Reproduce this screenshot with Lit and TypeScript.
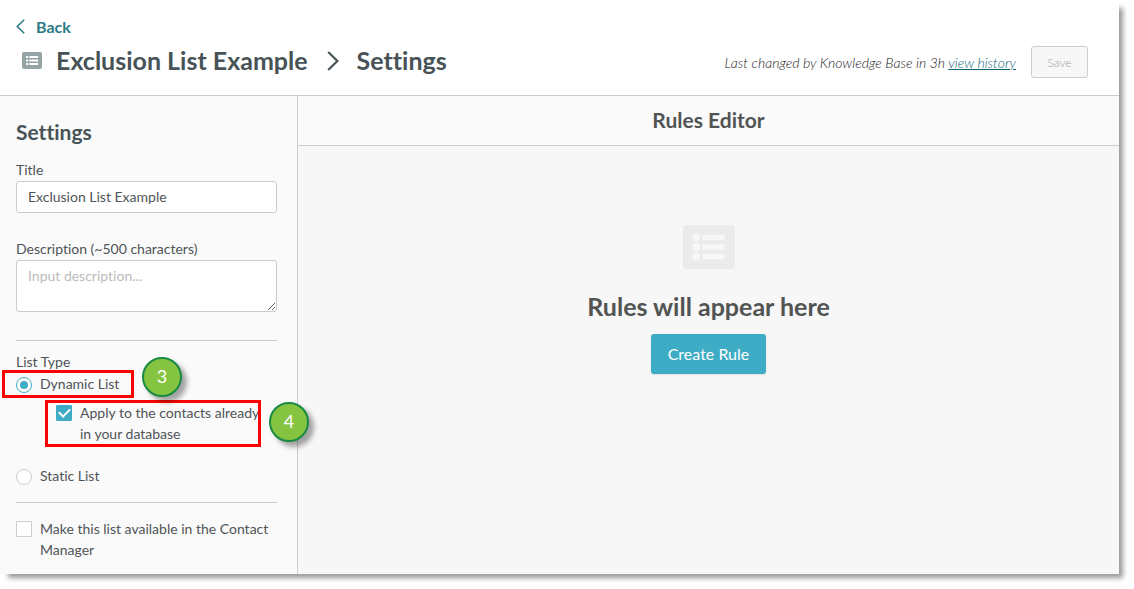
import { LitElement, html, css, svg } from "lit";
import { customElement, property, state } from "lit/decorators.js";

@customElement("list-icon")
class ListIcon extends LitElement {
  @property({ type: Boolean }) small = false;
  static styles = css`
    :host { display: block; }
    svg { display: block; width: 100%; height: auto; }
    .plate { fill: var(--icon-plate, #95a5a6); }
    .mark { fill: var(--icon-mark, #fff); }
  `;
  render() {
    if (this.small) {
      return html`<svg viewBox="0 0 20 17" aria-hidden="true">
        <rect class="plate" width="20" height="17" rx="2"></rect>
        ${[4, 7.5, 11].map(
          (y) => svg`
            <rect class="mark" x="4" y=${y} width="2.2" height="2" rx="0.6"></rect>
            <rect class="mark" x="7.2" y=${y} width="9" height="2" rx="0.4"></rect>`
        )}
      </svg>`;
    }
    return html`<svg viewBox="0 0 52 44" aria-hidden="true">
      <rect class="plate" width="52" height="44" rx="4"></rect>
      ${[12.5, 22, 31.5].map(
        (y) => svg`
          <circle class="mark" cx="13" cy=${y} r="3.9"></circle>
          <rect class="mark" x="19.5" y=${y - 2.7} width="22" height="5.4" rx="1"></rect>`
      )}
    </svg>`;
  }
}

@customElement("step-badge")
class StepBadge extends LitElement {
  @property() label = "";
  static styles = css`
    :host {
      display: flex;
      align-items: center;
      justify-content: center;
      box-sizing: border-box;
      width: 40px;
      height: 40px;
      padding-bottom: 2px;
      border: 2px solid #1a8a43;
      border-radius: 50%;
      background: #85c441;
      box-shadow: 5px 5px 5px rgba(0, 0, 0, 0.35);
      color: #fff;
      font-size: 18px;
      line-height: 24px;
    }
  `;
  render() {
    return html`${this.label}`;
  }
}

@customElement("app-root")
class AppRoot extends LitElement {
  @state() private listType = "dynamic";

  static styles = css`
    :host {
      display: block;
      box-sizing: border-box;
      min-height: 100vh;
      padding: 0 15px 15px 0;
      background: #fff;
      font-family: Lato, "Liberation Sans", sans-serif;
      font-size: 14px;
      font-variant-ligatures: none;
      line-height: 21px;
      color: #4f5457;
    }
    * { box-sizing: border-box; }
    h1, h2, h3, p { margin: 0; }
    a { color: #2c7a86; }
    input, textarea, button { font: inherit; color: inherit; margin: 0; }

    .window {
      display: flex;
      flex-direction: column;
      min-height: calc(100vh - 15px);
      background: #fff;
      box-shadow: 6px 6px 5px -2px rgba(0, 0, 0, 0.4);
    }
    .header {
      padding: 16px 31px 17px 16px;
      border-bottom: 1px solid #ccc;
    }
    .back {
      display: flex;
      align-items: center;
      gap: 11px;
      width: fit-content;
      font-size: 16px;
      font-weight: 700;
      text-decoration: none;
    }
    .back svg { width: 9px; height: 15px; }
    .title-row {
      display: flex;
      align-items: flex-start;
      justify-content: space-between;
      margin-top: 9px;
    }
    .crumbs { display: flex; align-items: center; height: 29px; color: #475356; }
    .crumbs h1 { font-size: 25px; line-height: 28px; font-weight: 700; padding-bottom: 1px; }
    .crumbs list-icon { width: 20px; margin: 0 14px 0 6px; }
    .crumbs svg { width: 12px; height: 20px; margin: 0 18px 0 19px; }
    .actions { display: flex; align-items: center; gap: 15px; }
    .changed { font-style: italic; font-weight: 300; color: #222; }
    .changed a { color: #0f6470; }
    .save {
      width: 57px;
      height: 32px;
      padding: 0;
      border: 1px solid #ccc;
      border-radius: 3px;
      background: #f7f7f7;
      color: #a0a0a0;
      font-size: 12px;
      font-weight: 300;
    }

    .body { display: flex; flex: 1; }
    .sidebar {
      width: 298px;
      flex: none;
      padding: 24px 20px 12px 16px;
      border-right: 1px solid #ccc;
      background: #fafafa;
    }
    .sidebar h2 {
      margin-bottom: 15px;
      font-size: 21px;
      line-height: 24px;
      font-weight: 700;
      color: #475356;
    }
    .label { display: block; padding-bottom: 1px; }
    .text {
      display: block;
      width: 100%;
      height: 32px;
      padding: 0 11px 2px;
      border: 1px solid #ccc;
      border-radius: 3px;
      background: #fff;
    }
    .area { height: 52px; padding: 4px 11px; resize: vertical; }
    .area::placeholder { color: #bbb; opacity: 1; }
    .field + .field { margin-top: 25px; }
    .rule { height: 1px; margin: 0; border: 0; background: #ccc; }
    .rule.first { margin: 28px 0 10px; }
    .rule.second { margin: 16px 0 15px; }

    .choice { display: flex; align-items: flex-start; gap: 8px; }
    fieldset { min-width: 0; margin: 0; padding: 0; border: 0; }
    legend { padding: 0 0 1px; }
    .tick, .radio {
      appearance: none;
      display: grid;
      place-items: center;
      flex: none;
      width: 16px;
      height: 16px;
      margin-top: 3px;
      border: 1px solid #ccc;
      background: #fff;
    }
    .tick { border-radius: 1px; }
    .tick:checked { border-color: #3eacc4; background: #3eacc4; }
    .tick:checked::before {
      content: "";
      width: 9px;
      height: 5px;
      margin-bottom: 3px;
      border: solid #fff;
      border-width: 0 0 2px 2px;
      transform: rotate(-45deg);
    }
    .radio { margin-top: 4px; border-radius: 50%; }
    .radio:checked { border-color: #3eacc4; }
    .radio:checked::before {
      content: "";
      width: 8px;
      height: 8px;
      border-radius: 50%;
      background: #3eacc4;
    }
    .marked { position: relative; }
    .nested { margin: 8px 12px 21px 40px; }
    .outline {
      position: absolute;
      border: 3px solid #f00;
      pointer-events: none;
    }
    .outline.one { left: -14px; top: -3px; width: 132px; height: 28px; }
    .outline.two { left: -11px; top: -2px; width: 216px; height: 47px; }
    .marked step-badge { position: absolute; z-index: 1; }
    .badge-one { left: 126px; top: -16px; }
    .badge-two { left: 213px; top: 0; }

    .editor {
      display: flex;
      flex: 1;
      flex-direction: column;
      background: #f7f7f7;
      color: #525454;
      text-align: center;
    }
    .editor h2 {
      padding: 12px 0 13px;
      border-bottom: 1px solid #ccc;
      background: #fafafa;
      font-size: 21px;
      line-height: 24px;
      font-weight: 700;
    }
    .empty {
      display: flex;
      flex-direction: column;
      align-items: center;
      padding-top: 79px;
    }
    .empty list-icon {
      width: 52px;
      --icon-plate: #ebebeb;
      --icon-mark: #f7f7f7;
    }
    .empty h3 { margin: 21px 0 12px; font-size: 25px; line-height: 32px; font-weight: 700; }
    .create {
      height: 40px;
      padding: 0 17px 1px;
      border: 0;
      border-radius: 3px;
      background: #3eacc4;
      box-shadow: 0 1px 2px rgba(0, 0, 0, 0.1);
      color: #fff;
      font-size: 16px;
    }
  `;

  private pick(e: Event) {
    this.listType = (e.target as HTMLInputElement).value;
  }

  render() {
    return html`
      <div class="window">
        <header class="header">
          <a class="back" href="#">
            <svg viewBox="0 0 9 15" fill="none" stroke="currentColor" stroke-width="1.6"><path d="M8.2 .8 1.3 7.5 8.2 14.2"></path></svg>
            Back
          </a>
          <div class="title-row">
            <div class="crumbs">
              <list-icon small></list-icon>
              <h1>Exclusion List Example</h1>
              <svg viewBox="0 0 12 20" fill="none" stroke="currentColor" stroke-width="2.2"><path d="M1.2 1 10.4 10 1.2 19"></path></svg>
              <h1>Settings</h1>
            </div>
            <div class="actions">
              <p class="changed">Last changed by Knowledge Base in 3h <a href="#">view history</a></p>
              <button class="save" disabled>Save</button>
            </div>
          </div>
        </header>
        <div class="body">
          <aside class="sidebar">
            <h2>Settings</h2>
            <div class="field">
              <label class="label" for="title">Title</label>
              <input class="text" id="title" type="text" value="Exclusion List Example" />
            </div>
            <div class="field">
              <label class="label" for="description">Description (~500 characters)</label>
              <textarea class="text area" id="description" placeholder="Input description..."></textarea>
            </div>
            <hr class="rule first" />
            <fieldset>
              <legend>List Type</legend>
              <div class="choice marked">
                <input class="radio" id="dynamic" type="radio" name="type" value="dynamic" .checked=${this.listType === "dynamic"} @change=${this.pick} />
                <label for="dynamic">Dynamic List</label>
                <div class="outline one"></div>
                <step-badge class="badge-one" label="3"></step-badge>
              </div>
              <div class="choice marked nested">
                <input class="tick" id="apply" type="checkbox" checked />
                <label for="apply">Apply to the contacts already in your database</label>
                <div class="outline two"></div>
                <step-badge class="badge-two" label="4"></step-badge>
              </div>
              <div class="choice">
                <input class="radio" id="static" type="radio" name="type" value="static" .checked=${this.listType === "static"} @change=${this.pick} />
                <label for="static">Static List</label>
              </div>
            </fieldset>
            <hr class="rule second" />
            <div class="choice">
              <input class="tick" id="available" type="checkbox" />
              <label for="available">Make this list available in the Contact Manager</label>
            </div>
          </aside>
          <main class="editor">
            <h2>Rules Editor</h2>
            <div class="empty">
              <list-icon></list-icon>
              <h3>Rules will appear here</h3>
              <button class="create">Create Rule</button>
            </div>
          </main>
        </div>
      </div>
    `;
  }
}
